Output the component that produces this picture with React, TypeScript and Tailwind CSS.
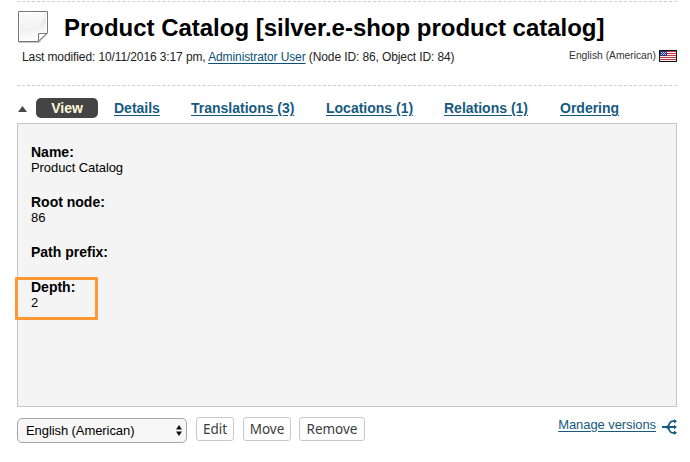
import React from "react";

const tabs = [
  { label: "Details", gap: "ml-4", width: "w-[46px]" },
  { label: "Translations (3)", gap: "ml-[31px]", width: "w-[104px]" },
  { label: "Locations (1)", gap: "ml-[31px]", width: "w-[87px]" },
  { label: "Relations (1)", gap: "ml-[31px]", width: "w-[84px]" },
  { label: "Ordering", gap: "ml-[32px]", width: "w-[60px]" },
];

function PageIcon() {
  return (
    <svg width="31" height="33" viewBox="0 0 31 33" className="shrink-0">
      <defs>
        <linearGradient id="sheet" x1="0" y1="0" x2="0.2" y2="1">
          <stop offset="0" stopColor="#e9e9e9" />
          <stop offset="0.5" stopColor="#ebebeb" />
          <stop offset="1" stopColor="#fdfdfd" />
        </linearGradient>
        <linearGradient id="gloss" x1="0" y1="0" x2="0.1" y2="1">
          <stop offset="0" stopColor="#fcfcfc" />
          <stop offset="1" stopColor="#f1f1f1" />
        </linearGradient>
      </defs>
      <path d="M0.5 31.5H21L23 30" fill="none" stroke="#c4c4c4" />
      <path d="M0.5 0.5H29.5V22L21 30.5H0.5Z" fill="#fff" stroke="#777" />
      <path d="M2 2H28V21H20V29H2Z" fill="url(#sheet)" />
      <path d="M2 2H27Q27 18 2 19Z" fill="url(#gloss)" />
      <path d="M20.5 30V22.5H29Z" fill="#fff" stroke="#777" />
    </svg>
  );
}

function Flag() {
  return (
    <svg width="18" height="12" viewBox="0 0 18 12" className="shrink-0" shapeRendering="crispEdges">
      <rect width="18" height="12" fill="#111" />
      <rect x="1" y="1" width="16" height="10" fill="#f4eeee" />
      <path d="M1 1.5H17M1 3.5H17M1 5.5H17M1 7.5H17M1 9.5H17" stroke="#c63743" />
      <rect x="1" y="1" width="7" height="5" fill="#263a83" />
      <path d="M2 2.5H3M4 2.5H5M6 2.5H7M3 3.5H4M5 3.5H6M2 4.5H3M4 4.5H5M6 4.5H7" stroke="#b9c1e4" />
    </svg>
  );
}

function Field({ label, value }: { label: string; value?: string }) {
  return (
    <div className="mb-5">
      <div className="text-[14px] font-bold leading-[15px]">{label}</div>
      {value && <div className="text-[13px] leading-[15px] tracking-[-0.08px]">{value}</div>}
    </div>
  );
}

function ActionButton({ label, width }: { label: string; width: string }) {
  return (
    <button
      className={`${width} h-6 rounded-[3px] border border-[#c9c9c9] bg-white text-center font-['Noto_Sans',sans-serif] text-[13.5px] leading-[22px] text-[#3c3c3c]`}
    >
      {label}
    </button>
  );
}

export default function App() {
  return (
    <div className="h-[462px] w-[690px] bg-white pl-[17px] pr-[13px] pt-px font-['Liberation_Sans',Arial,sans-serif] text-black">
      <header className="h-[85px] border-y border-dashed border-[#cfcfcf]">
        <div className="flex h-[43px] pl-px pt-[9px]">
          <PageIcon />
          <h1 className="ml-[15px] mt-[3px] whitespace-nowrap text-[24px] font-bold leading-[28px] tracking-[-0.02px]">
            Product Catalog [silver.e-shop product catalog]
          </h1>
        </div>
        <div className="flex justify-between pl-[5px] pt-[4px]">
          <p className="whitespace-nowrap text-[12px] leading-[16px] tracking-[-0.108px] text-[#222]">
            Last modified: 10/11/2016 3:17 pm,{" "}
            <a className="text-[#0b4f77] underline underline-offset-2">Administrator User</a> (Node ID: 86, Object ID: 84)
          </p>
          <div className="flex gap-[3px] text-[10.3px] leading-[13px] text-[#333]">
            <span className="whitespace-nowrap">English (American)</span>
            <div className="pt-px"><Flag /></div>
          </div>
        </div>
      </header>

      <nav className="flex h-[37px] pl-px pt-3 text-[14px] font-bold leading-5 text-[#175a80]">
        <svg width="9" height="6" viewBox="0 0 9 6" className="mt-2 shrink-0">
          <path d="M4.5 0L9 6H0Z" fill="#44464a" />
        </svg>
        <span className="ml-[9px] h-5 w-[62px] shrink-0 rounded-[5px] bg-[#444] text-center text-[#fff8dc]">View</span>
        {tabs.map((tab) => (
          <a key={tab.label} className={`${tab.gap} ${tab.width} shrink-0 whitespace-nowrap underline underline-offset-2`}>
            {tab.label}
          </a>
        ))}
      </nav>

      <main className="relative h-[284px] border border-[#c6c6c6] bg-[#f4f4f4] pl-[13px] pt-[21px]">
        <Field label="Name:" value="Product Catalog" />
        <Field label="Root node:" value="86" />
        <Field label="Path prefix:" />
        <Field label="Depth:" value="2" />
        <div className="absolute left-[-3px] top-[153px] h-[43px] w-[83px] rounded-[1px] border-[3px] border-[#ff9834]" />
      </main>

      <footer className="flex pt-[10px]">
        <div className="mt-px flex h-[25px] w-[170px] items-center justify-between rounded-[5px] border border-[#a6a6a6] bg-[#f7f7f7] pl-2 pr-[4px] text-[13px]">
          <span className="whitespace-nowrap tracking-[-0.08px]">English (American)</span>
          <svg width="6" height="11" viewBox="0 0 6 11">
            <path d="M3 0L6 4.5H0ZM0 6.5H6L3 11Z" fill="#111" />
          </svg>
        </div>
        <div className="ml-[9px] flex">
          <ActionButton label="Edit" width="w-[38px] mr-[9px]" />
          <ActionButton label="Move" width="w-[48px] mr-[8px]" />
          <ActionButton label="Remove" width="w-[66px]" />
        </div>
        <div className="ml-auto flex text-[13px] leading-4 text-[#175a80]">
          <a className="whitespace-nowrap tracking-[-0.08px] underline underline-offset-2">Manage versions</a>
          <svg width="15" height="16" viewBox="0 0 15 16" className="ml-[6px] mt-[2px]">
            <g fill="none" stroke="#175a80" strokeWidth="1.8">
              <path d="M0 8H13M13 2.2H10.5Q8.5 2.2 7.5 4.5Q6.5 8 3 8Q6.5 8 7.5 11.5Q8.5 13.8 10.5 13.8H13" />
            </g>
            <path d="M12 0L15 2.2L12 4.4ZM12 5.8L15 8L12 10.2ZM12 11.6L15 13.8L12 16Z" fill="#175a80" />
          </svg>
        </div>
      </footer>
    </div>
  );
}
